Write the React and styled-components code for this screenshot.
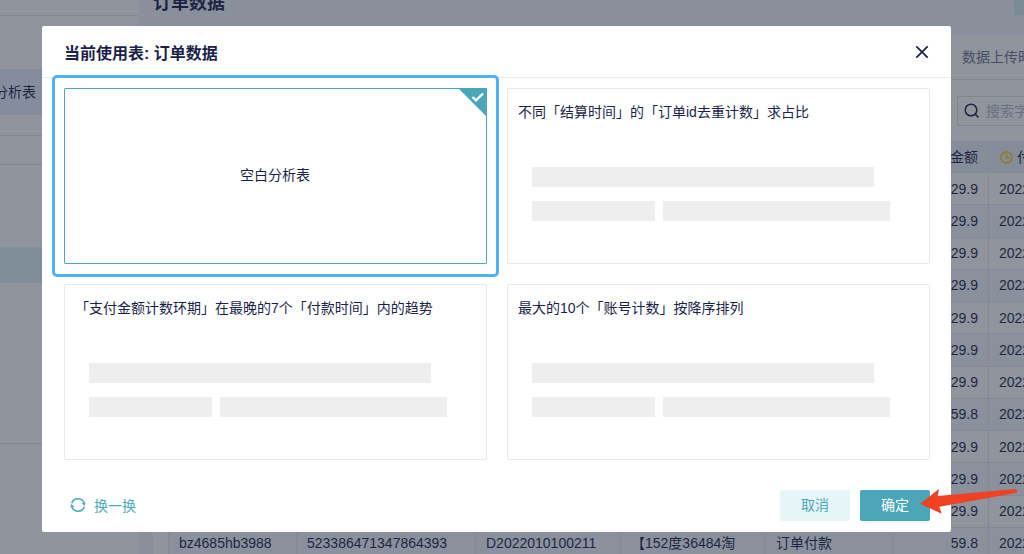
import React, { useState } from 'react'
import styled, { createGlobalStyle } from 'styled-components'

const GlobalStyle = createGlobalStyle`
  * {
    box-sizing: border-box;
  }

  body {
    margin: 0;
    overflow: hidden;
    color: #1b1f4b;
    font-family: "Liberation Sans", "Noto Sans CJK SC", sans-serif;
    font-size: 14px;
  }

  button, input {
    font: inherit;
    color: inherit;
  }
`

const Page = styled.div`
  display: flex;
  height: 100vh;
  margin-left: -80px;
  overflow: hidden;
  background: #ffffff;
`

const Sidebar = styled.nav`
  flex: none;
  width: 218px;
  display: flex;
  flex-direction: column;
`

const SideBlock = styled.div`
  flex: none;
  height: ${(props) => props.$height}px;
  border-bottom: 1px solid ${(props) => (props.$line ? '#e4e6ec' : 'transparent')};
  background: ${(props) => props.$fill || 'transparent'};
`

const SideLink = styled.a`
  flex: none;
  height: 46px;
  padding-left: 74px;
  line-height: 46px;
  color: #1b1f4b;
  background: #eaf0ff;
  text-decoration: none;
`

const Main = styled.main`
  flex: 1;
  min-width: 0;
  display: flex;
  flex-direction: column;
  padding-left: 15px;
  background: #f2f6fc;
`

const PageHeader = styled.header`
  flex: none;
  display: flex;
  justify-content: space-between;
  align-items: center;
  height: 68px;
  margin-top: -33px;
`

const PageTitle = styled.h1`
  margin: 0;
  font-size: 18px;
  font-weight: 600;
`

const HeaderButton = styled.button`
  width: 10px;
  height: 28px;
  padding: 0;
  border: 0;
  background: #d5edf1;
`

const Panel = styled.section`
  flex: 1;
  min-width: 0;
  overflow: hidden;
  background: #ffffff;
`

const UploadInfo = styled.div`
  display: flex;
  justify-content: flex-end;
  height: 45px;
  border-bottom: 1px solid #e4e6ec;
  line-height: 44px;
  color: #6f7290;

  span {
    width: 62px;
    white-space: nowrap;
  }
`

const SearchBar = styled.label`
  display: flex;
  align-items: center;
  gap: 6px;
  width: 180px;
  height: 30px;
  margin: 16px -113px 15px auto;
  padding: 0 6px;
  border: 1px solid #dcdfe6;
`

const SearchInput = styled.input`
  width: 120px;
  padding: 0;
  border: 0;
  background: none;

  &::placeholder {
    color: #b4b7c3;
    opacity: 1;
  }
`

const Table = styled.table`
  width: 980px;
  height: 419px;
  margin-left: 15px;
  table-layout: fixed;
  border-collapse: collapse;
  line-height: 20px;
`

const Cell = styled.td`
  padding: 0 10px;
  border: 1px solid #e4e6ec;
  white-space: nowrap;
  overflow: hidden;
  text-align: ${(props) => (props.$right ? 'right' : 'left')};
`

const HeadCell = styled(Cell)`
  height: 31px;
  font-weight: 400;
  background: #e9f0f7;

  svg {
    margin: 0 4px 0 1px;
    vertical-align: -2px;
  }
`

const Row = styled.tr`
  &:nth-child(even) {
    background: #f5f9fd;
  }
`

const Overlay = styled.div`
  position: fixed;
  inset: 0;
  padding: 26px 73px 22px 42px;
  background: rgba(31, 41, 59, 0.5);
`

const Dialog = styled.section`
  border-radius: 2px;
  background: #ffffff;
`

const DialogHeader = styled.header`
  display: flex;
  align-items: center;
  justify-content: space-between;
  height: 52px;
  padding: 0 22px;
  border-bottom: 1px solid #ebebeb;
`

const DialogTitle = styled.h2`
  margin: 0;
  font-size: 16px;
  font-weight: 600;
`

const CloseButton = styled.button`
  display: flex;
  padding: 0;
  border: 0;
  background: none;
`

const Templates = styled.div`
  display: grid;
  grid-template-columns: 1fr 1fr;
  gap: 20px;
  padding: 10px 21px 0 22px;
`

const Card = styled.button`
  position: relative;
  display: flex;
  flex-direction: column;
  justify-content: ${(props) => (props.$blank ? 'center' : 'flex-start')};
  align-items: ${(props) => (props.$blank ? 'center' : 'stretch')};
  height: 176px;
  padding: ${(props) => (props.$blank ? '0 1px 2px 0' : '13px 10px')};
  border: 1px solid ${(props) => (props.$selected ? '#4fa8b9' : '#e8e8e8')};
  border-radius: 1px;
  background: #ffffff;
  line-height: 20px;
  text-align: left;
`

const CheckMark = styled.svg`
  position: absolute;
  top: -1px;
  right: -1px;
`

const Highlight = styled.span`
  position: absolute;
  inset: -14px -13px;
  border: 3px solid #4fb0fb;
  border-radius: 5px;
`

const Bars = styled.span`
  display: flex;
  flex-wrap: wrap;
  gap: 14px 8px;
  padding: 45px 15px 0 14px;
`

const Bar = styled.span`
  width: ${(props) => props.$width}%;
  height: 20px;
  background: #eeeeee;
`

const DialogFooter = styled.footer`
  display: flex;
  align-items: center;
  gap: 10px;
  padding: 30px 21px 11px 28px;
`

const RefreshButton = styled.button`
  display: flex;
  align-items: center;
  gap: 8px;
  margin-right: auto;
  padding: 0 0 2px;
  border: 0;
  background: none;
  color: #4aa9ba;
`

const Button = styled.button`
  width: 70px;
  height: 31px;
  padding: 0 0 2px;
  border: 0;
  border-radius: 2px;
  line-height: 20px;
  color: ${(props) => (props.$primary ? '#ffffff' : '#4aa9ba')};
  background: ${(props) => (props.$primary ? '#4ca6b9' : '#e6f5f8')};
`

const Arrow = styled.svg`
  position: fixed;
  top: 486px;
  left: 918px;
  pointer-events: none;
`

const columns = [128, 179, 145, 145, 128, 95, 160]
const amounts = ['29.9', '29.9', '29.9', '29.9', '29.9', '29.9', '29.9', '59.8', '29.9', '29.9', '29.9', '59.8']

const templates = [
  { title: '空白分析表', blank: true },
  { title: '不同「结算时间」的「订单id去重计数」求占比' },
  { title: '「支付金额计数环期」在最晚的7个「付款时间」内的趋势' },
  { title: '最大的10个「账号计数」按降序排列' },
]

const ClockIcon = () => (
  <svg width="13" height="13" viewBox="0 0 13 13" fill="none" stroke="#ffcf24" strokeWidth="1.8">
    <circle cx="6.5" cy="6.5" r="5.5" />
    <path d="M6.5 3.5v3.3h3" />
  </svg>
)

const SearchIcon = () => (
  <svg width="16" height="16" viewBox="0 0 16 16" fill="none" stroke="#1b1f4b" strokeWidth="1.5">
    <circle cx="7" cy="7" r="5.8" />
    <path d="M11.2 11.2L14.4 14.4" />
  </svg>
)

const RefreshIcon = () => (
  <svg width="16" height="16" viewBox="0 0 16 16" fill="none" stroke="#4aa9ba" strokeWidth="1.5">
    <path d="M1.7 6.3A6.5 6.5 0 0 1 14.3 7.2" />
    <path d="M14.3 9.7A6.5 6.5 0 0 1 1.7 8.8" />
    <path d="M11.6 6.2L15.4 5.6L15 8.9Z" fill="#4aa9ba" stroke="none" />
    <path d="M4.4 9.8L0.6 10.4L1 7.1Z" fill="#4aa9ba" stroke="none" />
  </svg>
)

const OrderTable = () => (
  <Table>
    <colgroup>
      {columns.map((width, i) => (
        <col key={i} width={width} />
      ))}
    </colgroup>
    <thead>
      <tr>
        <HeadCell as="th" />
        <HeadCell as="th" />
        <HeadCell as="th" />
        <HeadCell as="th" />
        <HeadCell as="th" />
        <HeadCell as="th" $right>金额</HeadCell>
        <HeadCell as="th"><ClockIcon />付款时间</HeadCell>
      </tr>
    </thead>
    <tbody>
      {amounts.map((amount, i) => {
        const last = i === amounts.length - 1
        return (
          <Row key={i}>
            <Cell>{last && 'bz4685hb3988'}</Cell>
            <Cell>{last && '523386471347864393'}</Cell>
            <Cell>{last && 'D2022010100211'}</Cell>
            <Cell>{last && '【152度36484淘'}</Cell>
            <Cell>{last && '订单付款'}</Cell>
            <Cell $right>{amount}</Cell>
            <Cell>2022</Cell>
          </Row>
        )
      })}
    </tbody>
  </Table>
)

const App = () => {
  const [selected, setSelected] = useState(0)

  return (
    <>
      <GlobalStyle />
      <Page>
        <Sidebar>
          <SideBlock $height={16} $line />
          <SideBlock $height={53} />
          <SideLink href="#sheet">分析表</SideLink>
          <SideBlock $height={21} $line />
          <SideBlock $height={29} $line />
          <SideBlock $height={82} />
          <SideBlock $height={36} $fill="#dff3f4" />
          <SideBlock $height={161} $line />
        </Sidebar>
        <Main>
          <PageHeader>
            <PageTitle>订单数据</PageTitle>
            <HeaderButton aria-label="more" />
          </PageHeader>
          <Panel>
            <UploadInfo><span>数据上传时间</span></UploadInfo>
            <SearchBar>
              <SearchIcon />
              <SearchInput placeholder="搜索字段" />
            </SearchBar>
            <OrderTable />
          </Panel>
        </Main>
      </Page>
      <Overlay>
        <Dialog role="dialog" aria-labelledby="dialog-title">
          <DialogHeader>
            <DialogTitle id="dialog-title">当前使用表: 订单数据</DialogTitle>
            <CloseButton aria-label="关闭">
              <svg width="14" height="14" viewBox="0 0 14 14" stroke="#1b1f4b" strokeWidth="1.7">
                <path d="M1.3 1.3L12.7 12.7M12.7 1.3L1.3 12.7" />
              </svg>
            </CloseButton>
          </DialogHeader>
          <Templates>
            {templates.map((item, i) => (
              <Card
                key={item.title}
                $blank={item.blank}
                $selected={selected === i}
                onClick={() => setSelected(i)}
              >
                {item.title}
                {!item.blank && (
                  <Bars>
                    <Bar $width={92} />
                    <Bar $width={33} />
                    <Bar $width={61} />
                  </Bars>
                )}
                {selected === i && (
                  <>
                    <CheckMark width="29" height="29" viewBox="0 0 29 29">
                      <path d="M0 0H29V29Z" fill="#4ca6b9" />
                      <path d="M14.5 9L18 12.3L25 5.5" fill="none" stroke="#ffffff" strokeWidth="2.4" />
                    </CheckMark>
                    <Highlight />
                  </>
                )}
              </Card>
            ))}
          </Templates>
          <DialogFooter>
            <RefreshButton><RefreshIcon />换一换</RefreshButton>
            <Button>取消</Button>
            <Button $primary>确定</Button>
          </DialogFooter>
        </Dialog>
      </Overlay>
      <Arrow width="102" height="30" viewBox="0 0 102 30">
        <path
          d="M2 17.7L21 3L19.7 10L97.5 3Q99.3 3.2 99 6Q98.7 6.8 97.5 7L21.3 20.7L23.7 27.7Z"
          fill="#f04123"
        />
      </Arrow>
    </>
  )
}

export default App
